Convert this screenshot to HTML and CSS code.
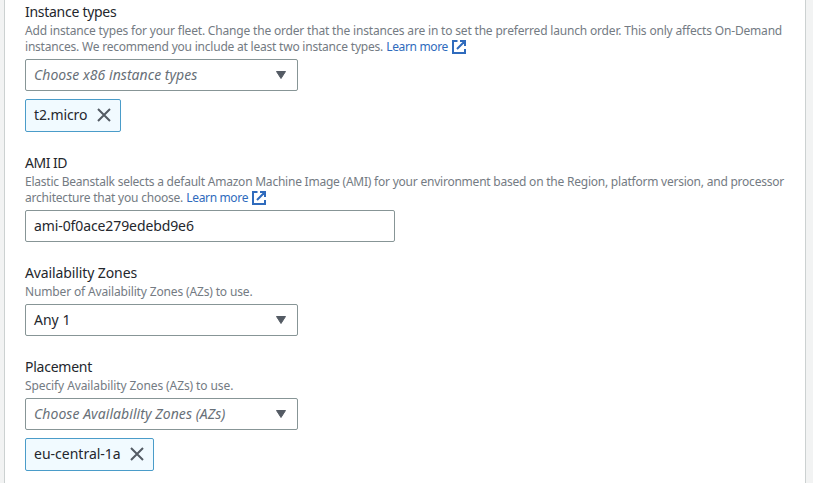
FILE: index.html
```html
<!DOCTYPE html>
<html lang="en">
<head>
<meta charset="utf-8">
<title>Instances</title>
<link rel="stylesheet" href="styles.css">
</head>
<body>
<svg class="defs" aria-hidden="true">
  <symbol id="external" viewBox="0 0 14 14"><path d="M5.5 1H1v12h12V9M8 1h5v5M13 1 5 9" fill="none" stroke="currentColor" stroke-width="2"/></symbol>
  <symbol id="close" viewBox="0 0 14 14"><path d="m1 1 12 12M13 1 1 13" fill="none" stroke="currentColor" stroke-width="2"/></symbol>
  <symbol id="caret" viewBox="0 0 10 8"><path d="M.5.5h9L5 7.5z" fill="currentColor" stroke="currentColor" stroke-linejoin="round"/></symbol>
</svg>
<main class="panel">
  <section class="field">
    <h3 class="label"><span class="t-types">Instance types</span></h3>
    <p class="hint"><span class="t-add">Add instance types for your fleet. Change the order that the instances are in to set the preferred launch order. This only affects On-Demand</span><br><span class="t-rec">instances. We recommend you include at least two instance types.</span> <a class="link" href="#">Learn more<svg class="ext"><use href="#external"/></svg></a></p>
    <div class="control select placeholder"><span class="t-x86">Choose x86 instance types</span><svg class="caret"><use href="#caret"/></svg></div>
    <div class="token token-type"><span class="t-micro">t2.micro</span><svg class="close"><use href="#close"/></svg></div>
  </section>
  <section class="field">
    <h3 class="label"><span class="t-ami">AMI ID</span></h3>
    <p class="hint"><span class="t-eb">Elastic Beanstalk selects a default Amazon Machine Image (AMI) for your environment based on the Region, platform version, and processor</span><br><span class="t-arch">architecture that you choose.</span> <a class="link" href="#">Learn more<svg class="ext"><use href="#external"/></svg></a></p>
    <div class="control input"><span class="t-id">ami-0f0ace279edebd9e6</span></div>
  </section>
  <section class="field">
    <h3 class="label"><span class="t-az">Availability Zones</span></h3>
    <p class="hint"><span class="t-num">Number of Availability Zones (AZs) to use.</span></p>
    <div class="control select"><span class="t-any">Any 1</span><svg class="caret"><use href="#caret"/></svg></div>
  </section>
  <section class="field">
    <h3 class="label"><span class="t-place">Placement</span></h3>
    <p class="hint"><span class="t-spec">Specify Availability Zones (AZs) to use.</span></p>
    <div class="control select placeholder"><span class="t-choose">Choose Availability Zones (AZs)</span><svg class="caret"><use href="#caret"/></svg></div>
    <div class="token token-zone"><span class="t-eu">eu-central-1a</span><svg class="close"><use href="#close"/></svg></div>
  </section>
</main>
</body>
</html>
```
FILE: styles.css
```css
* { box-sizing: border-box; }
body { margin: 0; height: 483px; overflow: hidden; background: #f2f3f3; color: #24272d; font: 14px/22px "Noto Sans", "Open Sans", sans-serif; }
.defs { display: none; }
.panel { width: 802px; height: 483px; margin-left: 4px; padding: 1px 20px 0; display: flex; flex-direction: column; gap: 20px; background: #fff; border: solid #ccd1d1; border-width: 0 1px; }
.field { flex: none; white-space: nowrap; }
.label { margin: 0; font-size: 14px; line-height: 22px; font-weight: 400; }
.hint { margin: 0 0 4px; font-size: 12px; line-height: 16px; color: #747b83; }
.link { color: #2f6bbd; text-decoration: none; letter-spacing: -.34px; }
.ext { width: 14px; height: 14px; margin: -1px 0 -3px 3.6px; vertical-align: baseline; }
.control { height: 32px; padding: 0 11px 0 8px; display: flex; align-items: center; justify-content: space-between; border: 1px solid #879596; border-radius: 2px; background: #fff; }
.select { width: 273px; }
.input { width: 370px; }
.placeholder { color: #687078; font-style: italic; }
.caret { width: 10px; height: 8px; color: #545b64; }
.token { height: 33px; margin-top: 8px; padding: 0 9px 1px 8px; display: flex; align-items: center; justify-content: space-between; border: 1px solid #4a9cc9; border-radius: 2px; background: #f1faff; }
.token-type { width: 96px; }
.token-zone { width: 129px; }
.close { width: 14px; height: 14px; color: #545b64; }

.t-types { letter-spacing: -.28px; }
.t-add { letter-spacing: -.18px; }
.t-rec { letter-spacing: -.215px; }
.t-x86 { letter-spacing: .04px; }
.t-micro { letter-spacing: -.12px; }
.t-ami { letter-spacing: -.5px; }
.t-eb { letter-spacing: -.226px; }
.t-arch { letter-spacing: -.21px; }
.t-id { letter-spacing: -.1px; }
.t-az { letter-spacing: -.11px; }
.t-num { letter-spacing: -.15px; }
.t-place { letter-spacing: -.25px; }
.t-spec { letter-spacing: -.1px; }
.t-choose { letter-spacing: .06px; }
```
